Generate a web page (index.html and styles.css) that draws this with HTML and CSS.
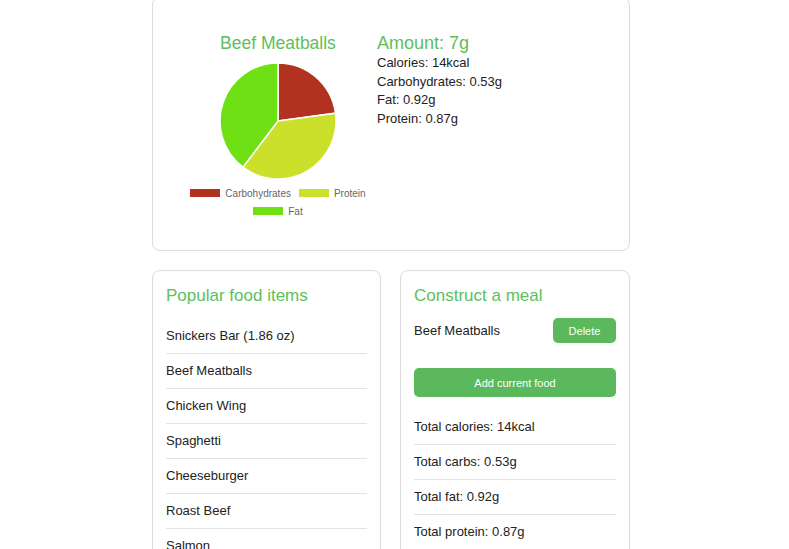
FILE: index.html
```html
<!DOCTYPE html>
<html>
<head>
<meta charset="utf-8">
<link rel="stylesheet" href="styles.css">
</head>
<body>
<div class="page">
  <section class="card top-card">
    <div class="chart">
      <div class="chart-title">Beef Meatballs</div>
      <svg class="pie" width="200" height="118" viewBox="0 0 200 118">
        <path d="M100 59 L100 1 A58 58 0 0 1 157.47 51.17 Z" fill="#b0321f" stroke="#fff" stroke-width="1.5"/>
        <path d="M100 59 L157.47 51.17 A58 58 0 0 1 64.9 105.17 Z" fill="#cbe02a" stroke="#fff" stroke-width="1.5"/>
        <path d="M100 59 L64.9 105.17 A58 58 0 0 1 100 1 Z" fill="#6ee014" stroke="#fff" stroke-width="1.5"/>
      </svg>
      <div class="legend">
        <div class="legend-row">
          <span class="legend-item"><span class="swatch sw-carb"></span>Carbohydrates</span>
          <span class="legend-item"><span class="swatch sw-prot"></span>Protein</span>
        </div>
        <div class="legend-row">
          <span class="legend-item"><span class="swatch sw-fat"></span>Fat</span>
        </div>
      </div>
    </div>
    <div class="details">
      <div class="amount">Amount: 7g</div>
      <div class="detail">Calories: 14kcal</div>
      <div class="detail">Carbohydrates: 0.53g</div>
      <div class="detail">Fat: 0.92g</div>
      <div class="detail">Protein: 0.87g</div>
    </div>
  </section>
  <div class="columns">
    <section class="card col-card col-left">
      <h2 class="card-title">Popular food items</h2>
      <ul class="list">
        <li>Snickers Bar (1.86 oz)</li>
        <li>Beef Meatballs</li>
        <li>Chicken Wing</li>
        <li>Spaghetti</li>
        <li>Cheeseburger</li>
        <li>Roast Beef</li>
        <li>Salmon</li>
      </ul>
    </section>
    <section class="card col-card col-right">
      <h2 class="card-title">Construct a meal</h2>
      <div class="meal-row">
        <span>Beef Meatballs</span>
        <button class="btn btn-delete">Delete</button>
      </div>
      <button class="btn btn-add">Add current food</button>
      <ul class="list totals">
        <li>Total calories: 14kcal</li>
        <li>Total carbs: 0.53g</li>
        <li>Total fat: 0.92g</li>
        <li>Total protein: 0.87g</li>
      </ul>
    </section>
  </div>
</div>
</body>
</html>
```

FILE: styles.css
```css
html, body {
  margin: 0;
  padding: 0;
  background: #fff;
  overflow: hidden;
}
body {
  font-family: "Liberation Sans", Arial, sans-serif;
  color: #222;
  font-size: 13px;
}
.page {
  width: 478px;
  margin-left: 152px;
  margin-top: -3px;
}
.card {
  border: 1px solid #dcdcdc;
  border-radius: 8px;
  box-sizing: border-box;
  background: #fff;
}
.top-card {
  height: 254px;
  display: flex;
  padding: 35px 0 0 25px;
}
.chart {
  width: 200px;
  display: flex;
  flex-direction: column;
  align-items: center;
}
.chart-title {
  font-size: 17.5px;
  line-height: 20px;
  color: #5cbf5c;
  margin-bottom: 9px;
}
.pie {
  display: block;
}
.legend {
  font-family: "Liberation Sans", Arial, sans-serif;
  font-size: 10px;
  color: #666;
  display: flex;
  flex-direction: column;
  align-items: center;
  margin-top: 4px;
}
.legend-row {
  height: 18px;
  display: flex;
  align-items: center;
  gap: 8px;
}
.legend-item {
  display: flex;
  align-items: center;
  white-space: nowrap;
}
.swatch {
  width: 30px;
  height: 8px;
  margin-right: 5px;
  display: inline-block;
}
.sw-carb { background: #b0321f; }
.sw-prot { background: #cbe02a; }
.sw-fat { background: #6ee014; }
.details {
  margin-left: -1px;
}
.amount {
  font-size: 18px;
  line-height: 22px;
  color: #5cbf5c;
  margin-top: -1px;
}
.detail {
  line-height: 18.5px;
}
.columns {
  display: flex;
  gap: 19px;
  margin-top: 19px;
}
.col-card {
  height: 300px;
  padding: 13px 13px 0 13px;
}
.col-left { width: 229px; }
.col-right { width: 230px; }
.card-title {
  margin: 0;
  font-weight: normal;
  font-size: 17px;
  line-height: 24px;
  color: #5cbf5c;
}
.list {
  list-style: none;
  margin: 11px 0 0;
  padding: 0;
}
.list li {
  padding: 9px 0;
  line-height: 16px;
  border-bottom: 1px solid #e3e3e3;
}
.meal-row {
  display: flex;
  justify-content: space-between;
  align-items: center;
  margin-top: 10px;
}
.btn {
  font-family: "Liberation Sans", Arial, sans-serif;
  background: #5cb85c;
  color: #fff;
  border: none;
  border-radius: 5px;
  font-size: 11px;
}
.btn-delete {
  width: 63px;
  height: 25px;
}
.btn-add {
  display: block;
  width: 100%;
  height: 29px;
  margin-top: 25px;
}
.totals {
  margin-top: 13px;
}
```
